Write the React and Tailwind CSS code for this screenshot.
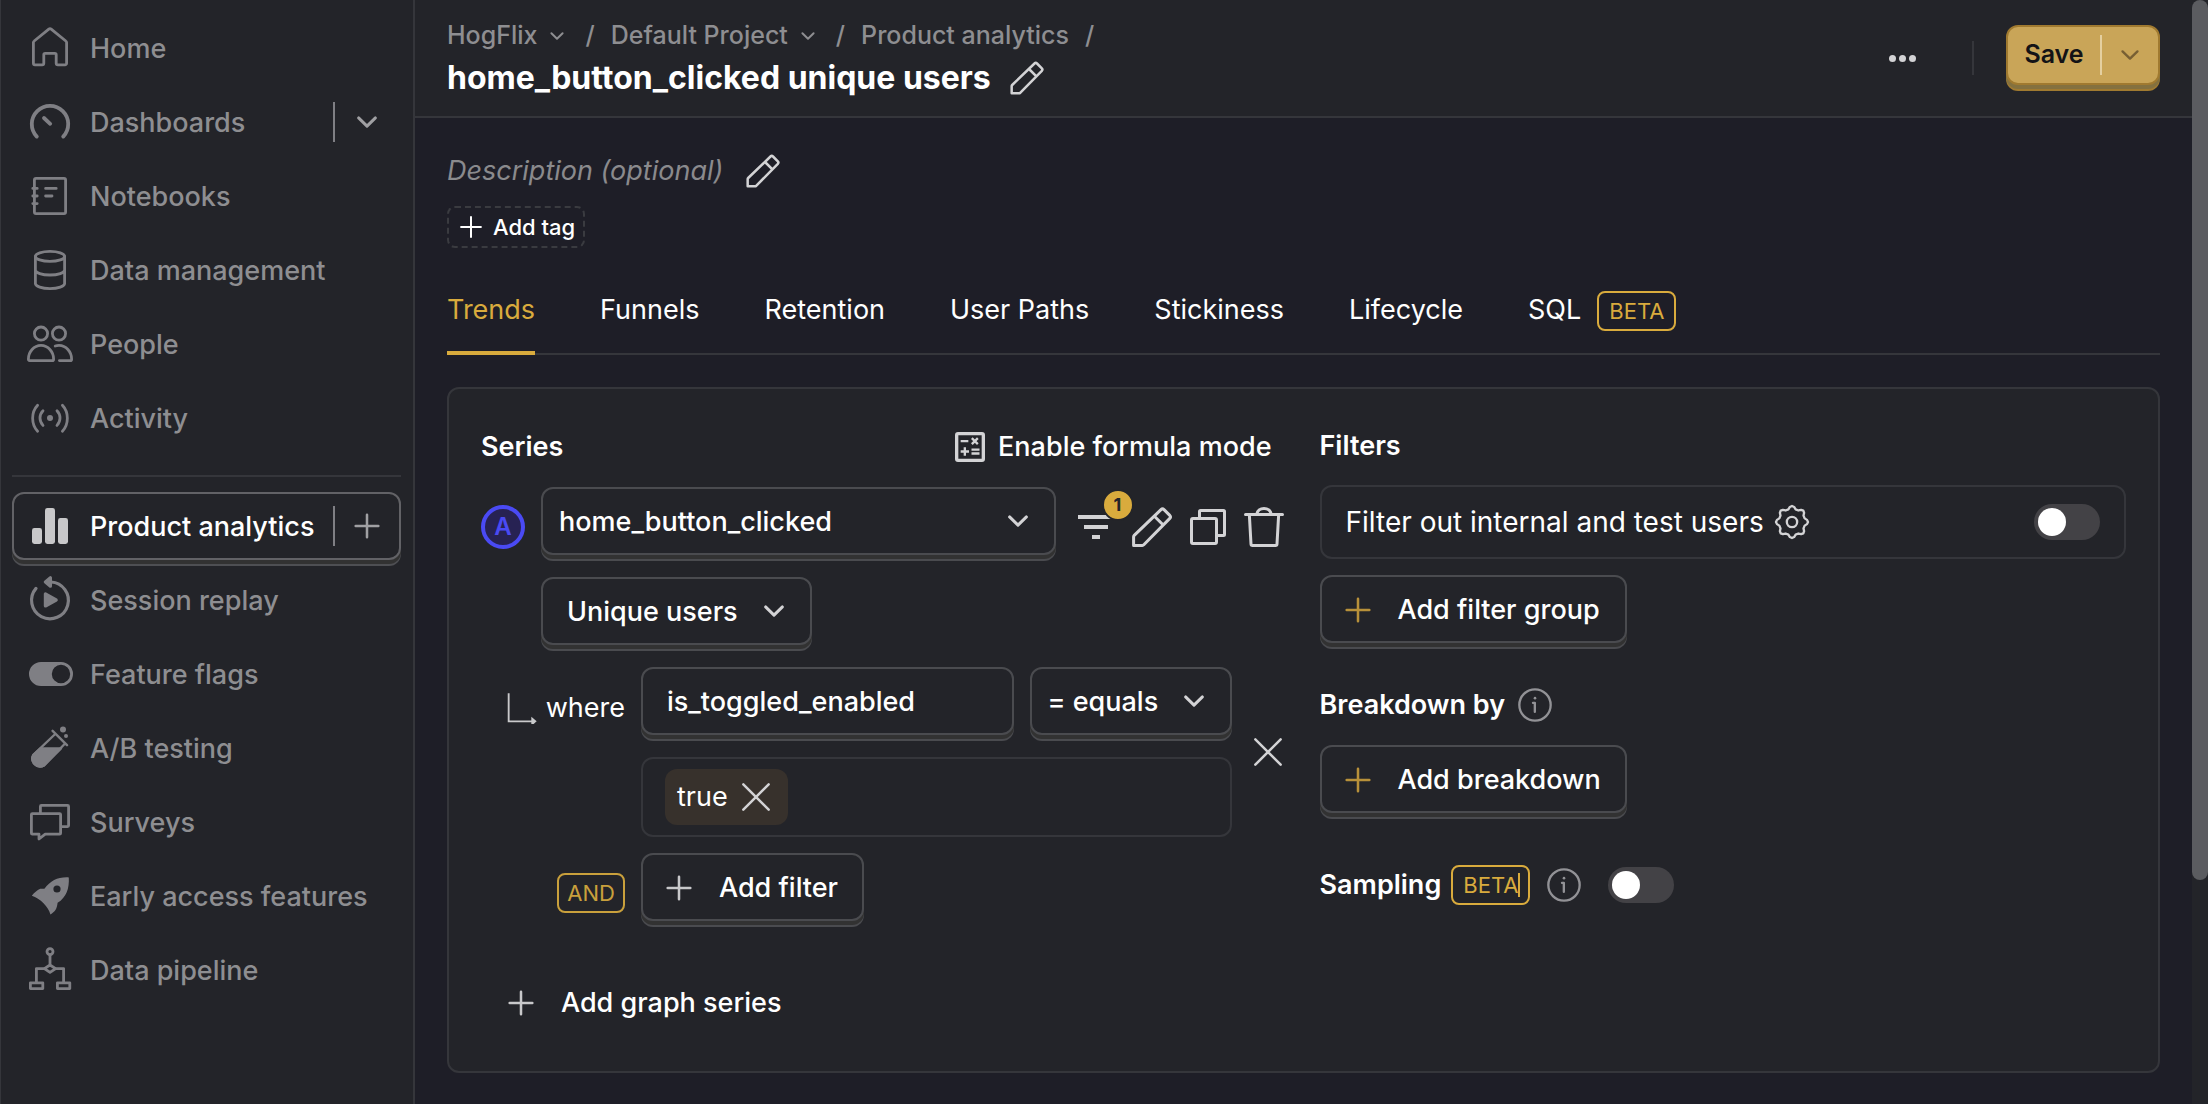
import React, { useState } from "react";

/* ---------- icons ---------- */

function Svg({ className = "size-12", children, stroke = 1.5 }) {
  return (
    <svg
      viewBox="0 0 24 24"
      fill="none"
      stroke="currentColor"
      strokeWidth={stroke}
      strokeLinecap="round"
      strokeLinejoin="round"
      aria-hidden="true"
      className={`shrink-0 ${className}`}
    >
      {children}
    </svg>
  );
}

const HomeIcon = () => (
  <Svg stroke={1.4}>
    <path d="M3.7 9.3a1 1 0 0 1 .4-.8l7.3-5.9a1 1 0 0 1 1.2 0l7.3 5.9a1 1 0 0 1 .4.8v10.3a.8.8 0 0 1-.8.8h-3.6a.8.8 0 0 1-.8-.8v-4.2a.7.7 0 0 0-.7-.7H9.6a.7.7 0 0 0-.7.7v4.2a.8.8 0 0 1-.8.8H4.5a.8.8 0 0 1-.8-.8z" />
  </Svg>
);
const GaugeIcon = () => (
  <Svg stroke={1.9}>
    <path d="M5.4 19.3A9.1 9.1 0 1 1 18.6 19.3" />
    <path d="M9 10l3.1 2.9" />
  </Svg>
);
const NotebookIcon = () => (
  <Svg stroke={1.4}>
    <rect x="4.2" y="3.2" width="15.6" height="17.6" rx="0.8" />
    <path d="M3.4 8.2h2.2M3.4 12h2.2M3.4 15.8h2.2M9.8 8.2h5.3M9.8 12h3.2" />
  </Svg>
);
const DatabaseIcon = () => (
  <Svg stroke={1.4}>
    <ellipse cx="12" cy="5.2" rx="7.3" ry="2.5" />
    <path d="M4.7 5.2v13.6c0 1.4 3.3 2.5 7.3 2.5s7.3-1.1 7.3-2.5V5.2M4.7 12c0 1.4 3.3 2.5 7.3 2.5s7.3-1.1 7.3-2.5" />
  </Svg>
);
const PeopleIcon = () => (
  <Svg stroke={1.4}>
    <circle cx="7.5" cy="6.8" r="3.3" />
    <circle cx="16.5" cy="6.8" r="3.3" />
    <path d="M1.2 19.6c0-3.8 2.8-6.9 6.3-6.9s6.3 3.1 6.3 6.9c0 .4-.2.7-.6.7H1.8c-.4 0-.6-.3-.6-.7z" />
    <path d="M14.6 13c.6-.2 1.2-.3 1.9-.3 3.5 0 6.3 3.1 6.3 6.9 0 .4-.2.7-.6.7h-5.5" />
  </Svg>
);
const ActivityIcon = () => (
  <Svg stroke={1.4}>
    <circle cx="12" cy="12" r="1.5" fill="currentColor" stroke="none" />
    <path d="M5.8 5.6c-3.3 3.5-3.3 9.5 0 13M18.2 5.6c3.3 3.5 3.3 9.5 0 13M8.5 8.4c-2 2.1-2 5.2 0 7.3M15.5 8.4c2 2.1 2 5.2 0 7.3" />
  </Svg>
);
const BarsIcon = () => (
  <Svg className="size-12 text-[#c8c8ca]">
    <g fill="currentColor" stroke="none">
      <rect x="3" y="13" width="5" height="8" rx="1.2" />
      <rect x="9.5" y="3" width="5" height="18" rx="1.2" />
      <rect x="16" y="8" width="5" height="13" rx="1.2" />
    </g>
  </Svg>
);
const ReplayIcon = () => (
  <Svg stroke={1.6}>
    <path d="M12.5 3A9.2 9.2 0 1 1 5 6.2" />
    <path d="M12.2.9v4.2L9.7 3z" fill="currentColor" />
    <path d="M9.7 9v6l5.4-3z" fill="currentColor" />
  </Svg>
);
const FlagIcon = () => (
  <Svg>
    <path
      fill="currentColor"
      stroke="none"
      fillRule="evenodd"
      d="M7.5 6h10a6 6 0 0 1 0 12h-10a6 6 0 0 1 0-12zm10 1.4a4.6 4.6 0 1 0 0 9.2 4.6 4.6 0 0 0 0-9.2z"
    />
  </Svg>
);
const TestTubeIcon = () => (
  <Svg stroke={1.2}>
    <path d="M13.3 3.4l7.2 7.2M14.6 5L3.7 15.4a3.9 3.9 0 0 0 5.3 5.3L19.3 10" />
    <path d="M7.3 12.2h10.2L9 20.7a3.9 3.9 0 0 1-5.3-5.3z" fill="currentColor" />
    <circle cx="18.5" cy="2.7" r="1.5" fill="currentColor" stroke="none" />
    <circle cx="20" cy="6" r="1" fill="currentColor" stroke="none" />
  </Svg>
);
const ChatIcon = () => (
  <Svg stroke={1.4}>
    <path d="M2.7 8.3a.5.5 0 0 1 .5-.5h13.6a.5.5 0 0 1 .5.5v9.3a.5.5 0 0 1-.5.5H9.6l-3.1 2.4v-2.4H3.2a.5.5 0 0 1-.5-.5z" />
    <path d="M7.2 7.5V4.2a.5.5 0 0 1 .5-.5h13.1a.5.5 0 0 1 .5.5v9.6a.5.5 0 0 1-.5.5h-3" />
  </Svg>
);
const RocketIcon = () => (
  <Svg>
    <path
      fill="currentColor"
      stroke="none"
      fillRule="evenodd"
      d="M21.4 2.7c.3 5.5-1.2 9.9-5.6 12.7-.3 3-1.3 4.6-3.6 5.8-.9-3.7-5.1-8-9.3-9.3 1.2-1.5 2.6-2.7 4.2-3.5h2.1c3.1-4.2 6.9-6 12.2-5.7zm-5.9 4a1.8 1.8 0 1 0 0 3.6 1.8 1.8 0 0 0 0-3.6z"
    />
  </Svg>
);
const PipelineIcon = () => (
  <Svg stroke={1.4}>
    <circle cx="12" cy="2.8" r="1.5" />
    <path d="M12 4.4v5M9.2 11.3L12 9.5l2.8 1.8L12 13.2zM9 11.3H5.2v6.6M15 11.3h3.8v6.6" />
    <rect x="2.2" y="18.4" width="6.2" height="2.9" />
    <rect x="15.7" y="18.4" width="6.2" height="2.9" />
  </Svg>
);
const PencilIcon = ({ className }) => (
  <Svg className={className}>
    <path d="M2.8 21.2v-4.3c0-.3.1-.5.3-.7L16.5 3.3a1.1 1.1 0 0 1 1.5 0l2.9 2.9a1.1 1.1 0 0 1 0 1.5L7.9 20.9c-.2.2-.4.3-.7.3zM13.2 6.6l4.3 4.3" />
  </Svg>
);
const CopyIcon = () => (
  <Svg>
    <rect x="3.75" y="7.75" width="12.5" height="12.5" rx="0.7" />
    <path d="M7.75 7V4.25a.5.5 0 0 1 .5-.5h11.5a.5.5 0 0 1 .5.5v11.5a.5.5 0 0 1-.5.5H17" />
  </Svg>
);
const TrashIcon = () => (
  <Svg>
    <path d="M2.75 5.75h18.5M8.4 5.5c.3-1.6 1.7-2.8 3.6-2.8s3.3 1.2 3.6 2.8M4.7 6.3l.8 14.2c0 .4.4.75.8.75h11.4c.4 0 .8-.35.8-.75l.8-14.2" />
  </Svg>
);
const FilterIcon = () => (
  <Svg>
    <path d="M3 6h18v2H3zM6 11h12v2H6zM10 16h4v2h-4z" fill="currentColor" stroke="none" />
  </Svg>
);
const ChevronIcon = ({ className = "size-9", stroke = 2 }) => (
  <Svg className={className} stroke={stroke}>
    <path d="M6.4 9.3L12 14.7l5.6-5.4" />
  </Svg>
);
const PlusIcon = ({ className, stroke = 1.9 }) => (
  <Svg className={className} stroke={stroke}>
    <path d="M12 3.500v17M3.500 12h17" />
  </Svg>
);
const CloseIcon = () => (
  <Svg className="size-10">
    <path d="M4.4 4.4l15.2 15.2M19.6 4.4L4.4 19.6" />
  </Svg>
);
const CalculatorIcon = () => (
  <Svg className="size-10" stroke={1.4}>
    <rect x="4" y="4" width="16" height="16" rx="0.8" strokeWidth="2" />
    <path
      strokeLinecap="butt"
      d="M6.400 8.500h4.600M13.100 6.700l3.600 3.600M16.700 6.700l-3.600 3.600M6.400 14.700h5M8.900 12.200v5M12.900 13.600h4.800M12.900 15.900h4.800"
    />
  </Svg>
);
const InfoIcon = () => (
  <Svg className="size-10 text-[#929296]" stroke={1.4}>
    <circle cx="12" cy="12" r="9.4" />
    <path d="M10.8 10.7h1.1v5.4" />
    <circle cx="12" cy="7.9" r="0.8" fill="currentColor" stroke="none" />
  </Svg>
);
const BranchIcon = () => (
  <Svg className="size-8 text-[#c9c9cb]" stroke={1.4}>
    <path d="M2 1v21h18" strokeLinecap="butt" strokeLinejoin="miter" />
    <path d="M19 18.500l4 3.500-4 3.500z" fill="currentColor" stroke="none" />
  </Svg>
);

const gearPath = (() => {
  const pts = [];
  for (let k = 0; k < 8; k++) {
    [[-8, 9.1], [0, 9.6], [8, 9.1], [16, 7.9], [29, 7.9]].forEach(([d, r]) => {
      const a = ((k * 45 + d) * Math.PI) / 180;
      pts.push(`${(12 + r * Math.cos(a)).toFixed(2)} ${(12 + r * Math.sin(a)).toFixed(2)}`);
    });
  }
  return `M${pts.join("L")}Z`;
})();
const GearIcon = () => (
  <Svg className="size-10" stroke={1.4}>
    <path d={gearPath} />
    <circle cx="12" cy="12" r="3.1" />
  </Svg>
);

/* ---------- shared pieces ---------- */

const RAISED =
  "mb-1.5 h-[68px] rounded-xl border-2 border-[#4a4b4f] bg-[#232429] pt-0.5 font-medium text-white shadow-[0_4px_0_#323232,0_6px_0_#4a4b4f]";

function RaisedSelect({ label, value, className = "", pad = "pl-6" }) {
  return (
    <div className={`relative ${className}`}>
      <select aria-label={label} defaultValue={value} className={`${RAISED} block w-full appearance-none ${pad} pr-14`}>
        <option>{value}</option>
      </select>
      <ChevronIcon className="pointer-events-none absolute top-4 right-5 size-9 text-[#d3d3d5]" />
    </div>
  );
}

function Toggle({ label, id }) {
  const [on, setOn] = useState(false);
  return (
    <label htmlFor={id} className="flex h-9 w-[66px] shrink-0 cursor-pointer items-center rounded-full bg-[#434246] px-1 has-checked:justify-end">
      <input id={id} type="checkbox" role="switch" aria-label={label} checked={on} onChange={() => setOn(!on)} className="sr-only" />
      <span className="size-7 rounded-full bg-white" />
    </label>
  );
}

function Badge({ children }) {
  return (
    <span className="flex h-10 items-center rounded-lg border-2 border-[#d9ab3d] px-2.5 text-[22px] leading-none text-[#d9ab3d]">
      {children}
    </span>
  );
}

/* ---------- sidebar ---------- */

const TOP = [
  ["Home", HomeIcon],
  ["Dashboards", GaugeIcon, "menu"],
  ["Notebooks", NotebookIcon],
  ["Data management", DatabaseIcon],
  ["People", PeopleIcon],
  ["Activity", ActivityIcon],
];
const BOTTOM = [
  ["Product analytics", BarsIcon, "add"],
  ["Session replay", ReplayIcon],
  ["Feature flags", FlagIcon],
  ["A/B testing", TestTubeIcon],
  ["Surveys", ChatIcon],
  ["Early access features", RocketIcon],
  ["Data pipeline", PipelineIcon],
];

function NavItem({ label, Icon, side }) {
  const active = side === "add";
  return (
    <li className="flex h-[74px] items-center">
      <div
        className={`flex h-[68px] flex-1 items-center rounded-xl border-2 ${
          active ? "border-[#626266] shadow-[0_4px_0_#323232,0_6px_0_#4e4f53]" : "border-transparent"
        }`}
      >
        <a href="#" aria-current={active ? "page" : undefined} className="flex flex-1 items-center gap-4 pl-3 text-[#7f7f84]">
          <Icon />
          <span className={`pt-0.5 whitespace-nowrap ${active ? "text-white" : "text-[#8e8e91]"}`}>{label}</span>
        </a>
        {side && (
          <button
            type="button"
            aria-label={active ? "New insight" : "Show dashboards"}
            className="flex h-10 w-[66px] items-center justify-center border-l-2 border-[#7f7f84] text-[#a0a0a3]"
          >
            {active ? <PlusIcon className="size-8" /> : <ChevronIcon />}
          </button>
        )}
      </div>
    </li>
  );
}

function Sidebar() {
  return (
    <nav aria-label="Main" className="w-[415px] shrink-0 border-r-2 border-l border-[#35363b] bg-[#232429] pt-[11px] pr-3 pl-[11px] font-medium">
      <ul>
        {TOP.map(([label, Icon, side]) => (
          <NavItem key={label} label={label} Icon={Icon} side={side} />
        ))}
      </ul>
      <hr className="mt-5 mb-3 border-t-2 border-[#35363b]" />
      <ul>
        {BOTTOM.map(([label, Icon, side]) => (
          <NavItem key={label} label={label} Icon={Icon} side={side} />
        ))}
      </ul>
    </nav>
  );
}

/* ---------- header ---------- */

function Header() {
  return (
    <header className="flex items-center justify-between border-b-2 border-[#35363b] bg-[#232429] px-8">
      <div className="pt-5 pb-2.5">
        <ol className="flex h-[30px] items-center gap-4 pt-0.5 text-[25px] font-medium text-[#8e8e91]">
          <li>
            <button type="button" className="flex items-center gap-2">
              HogFlix <ChevronIcon className="size-6" />
            </button>
          </li>
          <li aria-hidden="true">/</li>
          <li>
            <button type="button" className="flex items-center gap-2">
              Default Project <ChevronIcon className="size-6" />
            </button>
          </li>
          <li aria-hidden="true">/</li>
          <li>
            <a href="#">Product analytics</a>
          </li>
          <li aria-hidden="true">/</li>
        </ol>
        <div className="flex h-14 items-center gap-4">
          <h1 className="text-[32px] font-bold text-white">home_button_clicked unique users</h1>
          <button type="button" aria-label="Edit name" className="text-[#d3d3d5]">
            <PencilIcon className="size-10" />
          </button>
        </div>
      </div>
      <div className="flex items-center">
        <button type="button" aria-label="More" className="flex gap-[3px] p-2">
          <span className="size-[7px] rounded-full bg-[#d3d3d5]" />
          <span className="size-[7px] rounded-full bg-[#d3d3d5]" />
          <span className="size-[7px] rounded-full bg-[#d3d3d5]" />
        </button>
        <span className="mr-8 ml-12 h-[34px] w-0.5 bg-[#35363b]" />
        <div className="mb-1.5 flex h-[60px] w-[154px] items-center rounded-xl border-2 border-[#a07a30] bg-[#c9a558] shadow-[0_4px_0_#84713f,0_6px_0_#a07a30]">
          <button type="button" className="flex-1 text-[25px] font-semibold text-[#131316]">
            Save
          </button>
          <button type="button" aria-label="Save options" className="flex h-10 w-[58px] items-center justify-center border-l-2 border-[#e5d0a0] text-[#775f33]">
            <ChevronIcon className="size-8" stroke={1.8} />
          </button>
        </div>
      </div>
    </header>
  );
}

/* ---------- editor ---------- */

function Series() {
  return (
    <section aria-label="Series">
      <div className="mb-4 flex h-[50px] items-center justify-between pt-0.5 pr-4">
        <h2 className="font-semibold">Series</h2>
        <button type="button" className="flex items-center gap-2 font-medium text-[#d3d3d5]">
          <CalculatorIcon />
          <span className="text-white">Enable formula mode</span>
        </button>
      </div>

      <div className="flex flex-col gap-4">
        <div className="flex items-center gap-4">
          <span className="mt-1.5 flex size-11 shrink-0 items-center justify-center rounded-full border-4 border-[#4a4af4] bg-[#272253] text-2xl font-semibold text-[#4a4af4]">
            A
          </span>
          <RaisedSelect label="Event" value="home_button_clicked" className="flex-1" pad="pl-4" />
          <div className="mt-1.5 flex gap-2 text-[#d3d3d5]">
            <button type="button" aria-label="Show filters" className="relative">
              <FilterIcon />
              <span className="absolute -top-3.5 -right-3.5 flex size-8 items-center justify-center rounded-full border-2 border-[#232429] bg-[#d9ab3d] text-lg font-bold text-[#232429]">
                1
              </span>
            </button>
            <button type="button" aria-label="Rename series">
              <PencilIcon className="size-12" />
            </button>
            <button type="button" aria-label="Duplicate series">
              <CopyIcon />
            </button>
            <button type="button" aria-label="Delete series">
              <TrashIcon />
            </button>
          </div>
        </div>

        <div className="pl-[60px]">
          <RaisedSelect label="Aggregation" value="Unique users" className="w-[271px]" />
        </div>

        <div className="flex gap-4">
          <div className="flex h-[74px] w-36 shrink-0 items-center justify-end gap-2 pt-2">
            <BranchIcon />
            <span>where</span>
          </div>
          <div className="flex min-w-0 flex-1 flex-col gap-4">
            <div className="flex gap-4">
              <button type="button" className={`${RAISED} flex-1 pl-6 text-left`}>
                is_toggled_enabled
              </button>
              <RaisedSelect label="Operator" value="= equals" className="w-[202px]" pad="pl-4" />
            </div>
            <div className="flex h-20 items-center rounded-xl border-2 border-[#35363b] px-[22px]">
              <span className="flex h-14 items-center gap-2 rounded-xl bg-[#37312c] px-3">
                true
                <button type="button" aria-label="Remove true" className="text-[#d3d3d5]">
                  <CloseIcon />
                </button>
              </span>
              <input aria-label="Filter value" className="h-full min-w-0 flex-1 bg-transparent pl-2 outline-none" />
            </div>
          </div>
          <button type="button" aria-label="Remove filter" className="text-[#d3d3d5]">
            <CloseIcon />
          </button>
        </div>

        <div className="flex gap-4">
          <div className="flex h-[74px] w-36 shrink-0 items-center justify-end pt-1.5">
            <span className="flex h-10 items-center rounded-lg border-2 border-[#c9a03c] px-2 text-[22px] leading-none text-[#c9a03c]">AND</span>
          </div>
          <button type="button" className={`${RAISED} flex items-center gap-6 pr-6 pl-5`}>
            <PlusIcon className="size-8 text-[#c8c8ca]" />
            Add filter
          </button>
        </div>
      </div>

      <button type="button" className="mt-[38px] flex h-[74px] items-center gap-6 pt-0.5 pl-6 font-medium">
        <PlusIcon className="size-8 text-[#c8c8ca]" />
        Add graph series
      </button>
    </section>
  );
}

function Filters() {
  return (
    <section aria-label="Filters">
      <h2 className="mb-4 flex h-12 items-center pt-0.5 font-semibold">Filters</h2>
      <div className="mb-4 flex h-[74px] items-center justify-between rounded-xl border-2 border-[#35363b] px-6">
        <div className="flex items-center gap-2">
          <label htmlFor="internal" className="text-[28px]">
            Filter out internal and test users
          </label>
          <button type="button" aria-label="Configure internal filters" className="text-[#d3d3d5]">
            <GearIcon />
          </button>
        </div>
        <Toggle id="internal" label="Filter out internal and test users" />
      </div>
      <button type="button" className={`${RAISED} flex w-[307px] items-center gap-6 pl-5`}>
        <PlusIcon className="size-8 text-[#b8913a]" />
        Add filter group
      </button>

      <h2 className="mt-[38px] mb-4 flex h-12 items-center gap-2.5 font-semibold">
        Breakdown by <InfoIcon />
      </h2>
      <button type="button" className={`${RAISED} flex w-[307px] items-center gap-6 pl-5`}>
        <PlusIcon className="size-8 text-[#b8913a]" />
        Add breakdown
      </button>

      <div className="mt-[52px] flex h-10 items-center">
        <h2 className="mr-2.5 font-semibold">Sampling</h2>
        <span className="relative mr-3.5 flex">
          <Badge>BETA</Badge>
          <span className="absolute top-2 right-2.5 h-6 w-0.5 bg-[#d9ab3d]" />
        </span>
        <InfoIcon />
        <span className="ml-6">
          <Toggle id="sampling" label="Sampling" />
        </span>
      </div>
    </section>
  );
}

const TABS = ["Trends", "Funnels", "Retention", "User Paths", "Stickiness", "Lifecycle", "SQL"];

export default function App() {
  return (
    <div className="flex min-h-screen bg-[#1e1e27] font-[Inter,sans-serif] text-[27px] text-white">
      <Sidebar />
      <div className="min-w-0 flex-1">
        <Header />
        <main className="p-8 pb-0">
          <div className="flex h-10 items-center gap-5 pt-0.5 text-[#8a8a8d] italic">
            Description (optional)
            <button type="button" aria-label="Edit description" className="text-[#d3d3d5]">
              <PencilIcon className="size-10" />
            </button>
          </div>
          <button type="button" className="mt-4 flex h-[42px] items-center gap-2 rounded-lg border-2 border-dashed border-[#3a3b40] px-2 text-[22px] font-medium">
            <PlusIcon className="size-7" stroke={1.7} />
            Add tag
          </button>

          <div role="tablist" className="mt-4 flex h-[91px] gap-[65px] border-b-2 border-[#35363b]">
            {TABS.map((t, i) => (
              <button
                key={t}
                type="button"
                role="tab"
                aria-selected={i === 0}
                className={`-mb-0.5 flex items-center gap-4 border-b-4 pt-1.5 whitespace-nowrap ${
                  i === 0 ? "border-[#d9ab3d] text-[#d9ab3d]" : "border-transparent"
                }`}
              >
                {t}
                {t === "SQL" && <Badge>BETA</Badge>}
              </button>
            ))}
          </div>

          <div className="mt-8 grid grid-cols-2 gap-8 rounded-xl border-2 border-[#35363b] bg-[#232429] p-8">
            <Series />
            <Filters />
          </div>
        </main>
      </div>
      <div aria-hidden="true" className="flex w-4 shrink-0 flex-col bg-[#232429]">
        <div className="h-[880px] rounded-full bg-[#5b5c60]" />
      </div>
    </div>
  );
}
